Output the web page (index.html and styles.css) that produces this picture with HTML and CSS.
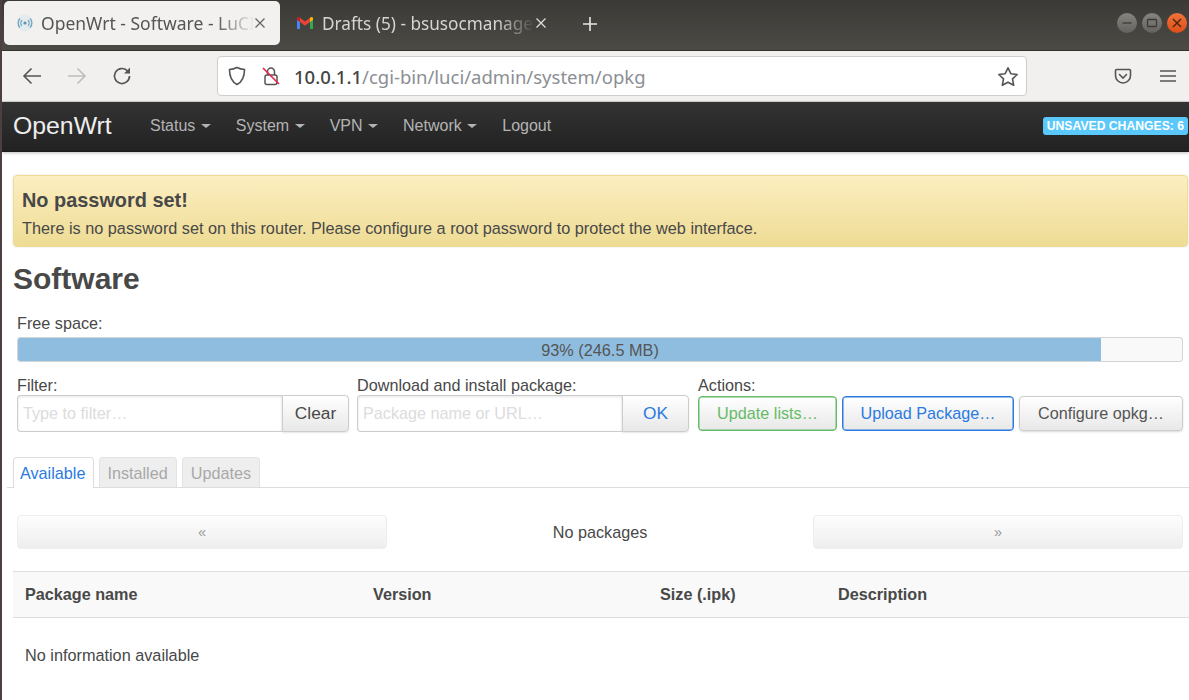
FILE: index.html
```html
<!DOCTYPE html>
<html lang="en">
<head>
	<meta charset="UTF-8">
	<title>OpenWrt - Software - LuCI</title>
	<link rel="stylesheet" href="styles.css">
</head>
<body>
	<div class="tabbar">
		<div class="tab active">
			<svg class="favicon" width="18" height="18" viewBox="0 0 18 18" fill="none" stroke="#6fa3bd" stroke-width="1.3">
				<circle cx="9" cy="9" r="8.5" fill="#e3ebef" stroke="none"/>
				<circle cx="9" cy="9" r="1.6" fill="#5b93b0" stroke="none"/>
				<path d="M6 6.2a4 4 0 0 0 0 5.6M12 6.2a4 4 0 0 1 0 5.6M4 4.5a6.4 6.4 0 0 0 0 9M14 4.5a6.4 6.4 0 0 1 0 9"/>
			</svg>
			<span class="tab-title">OpenWrt - Software - LuCI</span>
			<svg class="tab-close" width="12" height="12" viewBox="0 0 12 12" stroke="#666" stroke-width="1.3"><path d="M1.5 1.5l9 9M10.500 1.500l-9 9"/></svg>
		</div>
		<div class="tab second">
			<svg class="favicon" width="18" height="14" viewBox="0 0 18 14" fill="none">
				<path d="M1 13V3l3 2v8z" fill="#4285f4"/>
				<path d="M14 13V5l3-2v10z" fill="#34a853"/>
				<path d="M14 1.800v4.200l3-2.200V2.500c0-1.500-1.700-2-3-.7z" fill="#fbbc04"/>
				<path d="M4 6V1.800L9 5.600l5-3.800V6L9 9.800z" fill="#ea4335"/>
				<path d="M1 3.800V2.500c0-1.500 1.700-2 3-.7V6z" fill="#c5221f"/>
			</svg>
			<span class="tab-title">Drafts (5) - bsusocmanage</span>
			<svg class="tab-close" width="12" height="12" viewBox="0 0 12 12" stroke="#ddd" stroke-width="1.3"><path d="M1.500 1.500l9 9M10.500 1.500l-9 9"/></svg>
		</div>
		<svg class="new-tab" width="16" height="16" viewBox="0 0 16 16" stroke="#e8e8e6" stroke-width="1.600"><path d="M8 1v14M1 8h14"/></svg>
		<div class="win-btns">
			<span class="win-btn"><svg width="12" height="12" viewBox="0 0 12 12" stroke="#3a3a38" stroke-width="1.300"><path d="M1.500 6h9"/></svg></span>
			<span class="win-btn"><svg width="12" height="12" viewBox="0 0 12 12" fill="none" stroke="#3a3a38" stroke-width="1.300"><rect x="1.500" y="2.500" width="9" height="7" rx="1"/></svg></span>
			<span class="win-btn close"><svg width="12" height="12" viewBox="0 0 12 12" stroke="#4a2210" stroke-width="1.400"><path d="M2 2l8 8M10 2l-8 8"/></svg></span>
		</div>
	</div>

	<div class="toolbar">
		<span class="tool"><svg width="20" height="18" viewBox="0 0 20 18" fill="none" stroke="#555" stroke-width="1.600"><path d="M19 9H2M9.500 1.500L2 9l7.500 7.500"/></svg></span>
		<span class="tool"><svg width="20" height="18" viewBox="0 0 20 18" fill="none" stroke="#bdbdbd" stroke-width="1.600"><path d="M1 9h17M10.500 1.500L18 9l-7.500 7.500"/></svg></span>
		<span class="tool"><svg width="20" height="20" viewBox="0 0 20 20" fill="none" stroke="#555" stroke-width="1.700"><path d="M17.500 10a7.500 7.500 0 1 1-2.400-5.500L17.500 7"/><path d="M18 1.500V7.500h-6" stroke-width="0" fill="#555"/></svg></span>
		<div class="urlbar">
			<svg class="url-shield" width="18" height="20" viewBox="0 0 18 20" fill="none" stroke="#555" stroke-width="1.600"><path d="M9 1.500c2.500 1.200 5 1.800 7.500 2 0 7-1.500 12-7.500 15-6-3-7.500-8-7.500-15 2.500-.2 5-.8 7.500-2z"/></svg>
			<svg class="url-lock" width="18" height="20" viewBox="0 0 18 20" fill="none" stroke="#555" stroke-width="1.500"><rect x="3" y="9" width="12" height="9.500" rx="2"/><path d="M5.500 9V5.500a3.500 3.500 0 0 1 7 0V9"/><path d="M1 2l16 16" stroke="#e22850" stroke-width="1.700"/></svg>
			<span class="url-text"><b>10.0.1.1</b>/cgi-bin/luci/admin/system/opkg</span>
			<svg class="url-star" width="22" height="21" viewBox="0 0 22 21" fill="none" stroke="#555" stroke-width="1.600" stroke-linejoin="round"><path d="M11 1.800l2.800 5.900 6.400.8-4.700 4.400 1.200 6.400-5.700-3.100-5.700 3.100 1.200-6.400L1.800 8.500l6.400-.8z"/></svg>
		</div>
		<div class="tool-end">
			<span class="tool-sm"><svg width="18" height="17" viewBox="0 0 18 17" fill="none" stroke="#555" stroke-width="1.600"><path d="M2.500 1.500h13c.6 0 1 .4 1 1v5a7.500 7.500 0 0 1-15 0v-5c0-.6.4-1 1-1z"/><path d="M5.500 6.500L9 10l3.500-3.500" stroke-linecap="round"/></svg></span>
			<span class="tool-sm"><svg width="16" height="14" viewBox="0 0 16 14" stroke="#555" stroke-width="1.600"><path d="M0 2h16M0 7h16M0 12h16"/></svg></span>
		</div>
	</div>

	<div class="nav">
		<a class="brand">OpenWrt</a>
		<ul class="menu">
			<li class="drop">Status</li>
			<li class="drop">System</li>
			<li class="drop">VPN</li>
			<li class="drop">Network</li>
			<li>Logout</li>
		</ul>
		<span class="badge">Unsaved Changes: 6</span>
	</div>

	<div class="main">
		<div class="alert">
			<h4>No password set!</h4>
			<p>There is no password set on this router. Please configure a root password to protect the web interface.</p>
		</div>

		<h2>Software</h2>

		<div class="controls">
			<label class="free-label">Free space:</label>
			<div class="progress">
				<div class="progress-fill"></div>
				<div class="progress-text">93% (246.5 MB)</div>
			</div>

			<div class="control-row">
				<div>
					<label>Filter:</label>
					<div class="input-group">
						<input type="text" placeholder="Type to filter…">
						<button class="addon">Clear</button>
					</div>
				</div>
				<div>
					<label>Download and install package:</label>
					<div class="input-group">
						<input type="text" placeholder="Package name or URL…">
						<button class="addon ok">OK</button>
					</div>
				</div>
				<div>
					<label>Actions:</label>
					<div class="actions">
						<button class="btn positive">Update lists…</button>
						<button class="btn primary">Upload Package…</button>
						<button class="btn">Configure opkg…</button>
					</div>
				</div>
			</div>
		</div>

		<ul class="tabs">
			<li class="current">Available</li>
			<li>Installed</li>
			<li>Updates</li>
		</ul>

		<div class="pager">
			<button class="page">«</button>
			<span class="page-info">No packages</span>
			<button class="page">»</button>
		</div>

		<table class="pkgs">
			<colgroup>
				<col class="c-name">
				<col class="c-ver">
				<col class="c-size">
				<col>
			</colgroup>
			<thead>
				<tr>
					<th>Package name</th>
					<th>Version</th>
					<th>Size (.ipk)</th>
					<th>Description</th>
				</tr>
			</thead>
			<tbody>
				<tr>
					<td colspan="4">No information available</td>
				</tr>
			</tbody>
		</table>
	</div>
</body>
</html>
```

FILE: styles.css
```css
* {
	box-sizing: border-box;
}
html {
	height: 100%;
}
body {
	margin: 0;
	height: 700px;
	overflow: hidden;
	border-left: 2px solid #4b3f3f;
	background: #fff;
	color: #484848;
	font-family: "Liberation Sans", Arial, sans-serif;
	font-size: 16.200px;
}

/* browser chrome */
.tabbar {
	display: flex;
	align-items: flex-start;
	height: 51px;
	padding: 1px 0 0 2px;
	background: linear-gradient(#3b3a36, #4b4a45);
	border-bottom: 1px solid #33322f;
}
.tab {
	display: flex;
	align-items: center;
	width: 276px;
	height: 44px;
	padding: 0 14px 0 12px;
	border-radius: 5px;
	color: #d6d5d1;
	font-family: "Noto Sans", sans-serif;
	font-size: 17.500px;
}
.tab.second {
	padding: 0 9px 0 16px;
	font-size: 17.200px;
}
.tab.active {
	background: #f2f1f0;
	color: #555;
}
.favicon {
	flex: none;
	margin-right: 7px;
}
.second .favicon {
	margin-right: 8px;
}
.tab-title {
	flex: 1;
	min-width: 0;
	overflow: hidden;
	white-space: nowrap;
	-webkit-mask-image: linear-gradient(to right, #000 82%, transparent 100%);
	mask-image: linear-gradient(to right, #000 82%, transparent 100%);
}
.tab-close {
	flex: none;
}
.new-tab {
	margin: 15px 0 0 26px;
}
.win-btns {
	display: flex;
	gap: 5px;
	margin: 12px 2px 0 auto;
}
.win-btn {
	display: flex;
	align-items: center;
	justify-content: center;
	width: 20px;
	height: 20px;
	border-radius: 50%;
	background: linear-gradient(#85847f, #63625e);
}
.win-btn.close {
	background: linear-gradient(#f0743a, #dd4e17);
}
.toolbar {
	display: flex;
	align-items: center;
	height: 51px;
	padding: 0 1px 0 7px;
	background: #f1f0ef;
	border-bottom: 1px solid #d5d4d2;
}
.tool {
	display: flex;
	align-items: center;
	justify-content: center;
	width: 45px;
}
.urlbar {
	display: flex;
	align-items: center;
	width: 810px;
	height: 40px;
	margin-left: 73px;
	padding: 0 7px 0 10px;
	background: #fff;
	border: 1px solid #cfcecc;
	border-radius: 4px;
}
.url-lock {
	margin-left: 16px;
}
.url-text {
	flex: 1;
	margin-left: 14px;
	color: #8b8e93;
	font-family: "Noto Sans", sans-serif;
	font-size: 18.500px;
	white-space: nowrap;
}
.url-text b {
	font-weight: 500;
	color: #444;
}
.tool-end {
	display: flex;
	gap: 5px;
	margin-left: auto;
}
.tool-sm {
	display: flex;
	align-items: center;
	justify-content: center;
	width: 40px;
}

/* luci header */
.nav {
	display: flex;
	align-items: center;
	height: 50px;
	padding: 0 1px 2px 11px;
	background: linear-gradient(#333, #222);
	border-bottom: 1px solid #1c1c1c;
	box-shadow: 0 1px 3px rgba(0, 0, 0, .25);
}
.brand {
	width: 137px;
	color: #eee;
	font-size: 24.800px;
}
.menu {
	display: flex;
	gap: 24.800px;
	margin: 0;
	padding: 0;
	list-style: none;
	color: #b4b4b4;
	font-size: 16px;
}
.drop::after {
	content: "";
	display: inline-block;
	margin-left: 5.700px;
	vertical-align: 3px;
	border-top: 4px solid #b4b4b4;
	border-left: 5px solid transparent;
	border-right: 5px solid transparent;
}
.badge {
	margin-left: auto;
	padding: 2px 4px;
	height: 18px;
	line-height: 14px;
	border-radius: 3px;
	background: #5bc8fb;
	color: #fff;
	font-size: 12.200px;
	font-weight: bold;
	text-transform: uppercase;
	white-space: nowrap;
}

/* page */
.main {
	padding: 23px 0 0 11px;
}
.alert {
	height: 72px;
	margin-right: 1px;
	padding: 13px 8px 0;
	border: 1px solid #eedc94;
	border-radius: 4px;
	background: linear-gradient(#fceec1, #eedc94);
	box-shadow: 0 0 2px rgba(0, 0, 0, .15);
}
.alert h4 {
	margin: 0;
	font-size: 19.900px;
	line-height: 22px;
}
.alert p {
	margin: 9px 0 0;
	font-size: 16.250px;
	line-height: 17px;
}
h2 {
	margin: 14px 0 0;
	font-size: 30px;
	line-height: 36px;
}
.controls {
	padding: 0 6px 0 4px;
}
label {
	display: block;
	font-size: 16.200px;
	line-height: 17px;
}
.free-label {
	margin-top: 18px;
}
.progress {
	position: relative;
	height: 25px;
	margin-top: 5px;
	background: #f9f9f9;
	border: 1px solid #d4d4d4;
	border-radius: 3px;
	overflow: hidden;
}
.progress-fill {
	width: 93%;
	height: 100%;
	background: #8fbde0;
}
.progress-text {
	position: absolute;
	inset: 0;
	line-height: 25px;
	text-align: center;
	color: #555;
	font-size: 16.300px;
}
.control-row {
	display: grid;
	grid-template-columns: 332px 332px 1fr;
	gap: 8px;
	margin-top: 15px;
}
.control-row > div:last-child {
	margin-left: 1px;
}
.control-row label {
	height: 18px;
}
.input-group {
	display: flex;
	height: 37px;
}
input {
	flex: 1;
	min-width: 0;
	padding: 0 5px;
	border: 1px solid #ccc;
	border-right: 0;
	border-radius: 4px 0 0 4px;
	box-shadow: inset 0 1px 3px rgba(0, 0, 0, .1);
	font: 16.200px "Liberation Sans", Arial, sans-serif;
}
input::placeholder {
	color: #dcdcdc;
}
button {
	font-family: "Liberation Sans", Arial, sans-serif;
	color: #555;
	background: linear-gradient(#fff, #e8e8e8);
	border: 1px solid #ccc;
	cursor: pointer;
}
.addon {
	width: 67px;
	border-radius: 0 4px 4px 0;
	font-size: 17.300px;
	color: #484848;
	box-shadow: 0 1px 2px rgba(0, 0, 0, .1);
}
.addon.ok {
	color: #2a7ae2;
}
.actions {
	display: flex;
	justify-content: space-between;
	height: 35px;
	margin-top: 1px;
}
.btn {
	width: 164px;
	padding: 0;
	border-radius: 4px;
	font-size: 16.200px;
	box-shadow: 0 1px 2px rgba(0, 0, 0, .15);
}
.btn.positive {
	width: 139px;
	color: #66bb66;
	border-color: #66bb66;
	box-shadow: inset 0 0 0 .5px #66bb66;
}
.btn.primary {
	width: 172px;
	color: #2a7ae2;
	border-color: #2a7ae2;
	box-shadow: inset 0 0 0 .5px #2a7ae2;
}

.tabs {
	display: flex;
	gap: 5px;
	height: 31px;
	margin: 25px 0 0 -6px;
	padding: 0 0 0 6px;
	list-style: none;
	border-bottom: 1px solid #ddd;
	font-size: 16.200px;
}
.tabs li {
	height: 30px;
	padding: 0 8px 0 7px;
	line-height: 31px;
	color: #a8a8a8;
	background: #eee;
	border: 1px solid #e3e3e3;
	border-bottom: 0;
	border-radius: 4px 4px 0 0;
}
.tabs li:last-child {
	padding: 0 8px;
}
.tabs li.current {
	height: 31px;
	padding: 0 8px 0 6px;
	color: #2a7ae2;
	background: #fff;
	border-color: #ddd;
}

.pager {
	display: flex;
	align-items: center;
	height: 34px;
	margin: 27px 6px 0 4px;
}
.page {
	flex: none;
	width: 370px;
	height: 34px;
	border-color: #eee;
	border-radius: 4px;
	background: linear-gradient(#fdfdfd, #eee);
	color: #999;
	font-size: 14.500px;
}
.page-info {
	flex: 1;
	text-align: center;
}

.pkgs {
	width: 100%;
	margin-top: 22px;
	border-collapse: collapse;
	table-layout: fixed;
}
.c-name {
	width: 348px;
}
.c-ver {
	width: 287px;
}
.c-size {
	width: 178px;
}
th {
	height: 46px;
	padding: 0 12px;
	background: #f9f9f9;
	border-top: 1px solid #ddd;
	border-bottom: 1px solid #ddd;
	text-align: left;
	font-size: 16.200px;
}
td {
	height: 75px;
	padding: 0 12px;
	font-size: 16.250px;
}
```
